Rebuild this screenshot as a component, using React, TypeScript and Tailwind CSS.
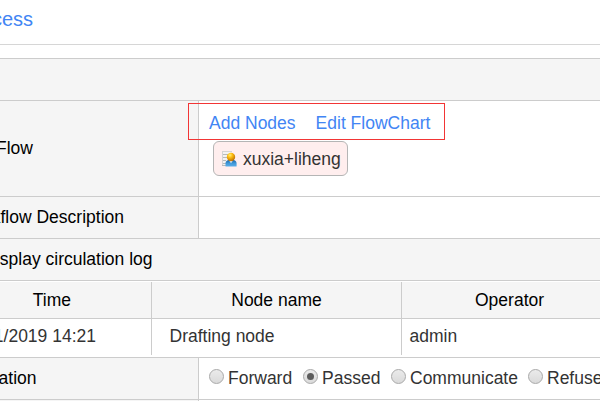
import type { ReactNode } from "react";

function UserIcon() {
  return (
    <svg width="16" height="16" viewBox="0 0 16 16" className="shrink-0">
      <defs>
        <radialGradient id="head" cx="0.38" cy="0.28" r="0.75">
          <stop offset="0" stopColor="#fff07a" />
          <stop offset="0.4" stopColor="#fdbb10" />
          <stop offset="1" stopColor="#b86a04" />
        </radialGradient>
        <linearGradient id="body" x1="0" y1="0" x2="0" y2="1">
          <stop offset="0" stopColor="#1b64a8" />
          <stop offset="0.5" stopColor="#3f97d8" />
          <stop offset="1" stopColor="#5aaeea" />
        </linearGradient>
      </defs>
      <rect x="1" y="0" width="10" height="15" fill="#f4f2f2" />
      <path d="M1 .5h10M1.500 0v15" stroke="#d4d4d4" />
      <path d="M2 3.500h6M2 6.500h4M2 9.500h3M2 12.500h3M1 14.500h5" stroke="#b9b9b9" />
      <path d="M4.500 15.500v-3C4.500 10.200 6 9 8 9h4c2.200 0 3.600 1.300 3.600 3.500v3z" fill="url(#body)" />
      <path d="M8 9.400h4l-2 2.800z" fill="#d7e9f7" />
      <circle cx="10" cy="6" r="4.200" fill="url(#head)" />
    </svg>
  );
}

function Radio({ checked = false }: { checked?: boolean }) {
  return (
    <span className="mr-1 flex size-[15px] shrink-0 -translate-y-px items-center justify-center rounded-full border border-[#a9a9a9] bg-linear-to-b from-[#ebebeb] to-[#dadada]">
      {checked && <span className="size-[7px] rounded-full bg-[#5c5c5c]" />}
    </span>
  );
}

function Label({ children, end }: { children: ReactNode; end: string }) {
  return (
    <div className="flex w-[199px] shrink-0 items-center border-r border-[#cccccc] bg-[#f5f5f5] pb-[2px] text-black">
      <div className={`flex justify-end ${end}`}>{children}</div>
    </div>
  );
}

export default function App() {
  return (
    <div className="h-[401px] w-[600px] overflow-hidden bg-white font-['Liberation_Sans',Arial,sans-serif] text-[17.5px] leading-[22px] whitespace-nowrap text-[#333333]">
      <header className="flex h-[45px] border-b border-[#d6d6d6] pt-2 text-[20px] text-[#4285f4]">
        <div className="flex w-[33px] justify-end">cess</div>
      </header>
      <main className="mt-[13px] border-t border-[#cccccc]">
        <div className="h-[42px] border-b border-[#cccccc] bg-[#f5f5f5]" />
        <div className="flex h-24 border-b border-[#cccccc]">
          <Label end="w-[33px]">Flow</Label>
          <div className="relative z-10 -ml-[11px] pt-[2px]">
            <div className="flex h-[37px] w-[257px] items-center gap-5 border border-[#f23535] pt-[2px] pl-5 text-[#4285f4]">
              <a>Add Nodes</a>
              <a>Edit FlowChart</a>
            </div>
            <div className="mt-px ml-[25px] flex h-[35px] w-[135px] items-center gap-[6px] rounded-[6px] border border-[#b5b5b5] bg-[#ffeeee] pl-[7px]">
              <UserIcon />
              <span>xuxia+liheng</span>
            </div>
          </div>
        </div>
        <div className="flex h-[42px] border-b border-[#cccccc]">
          <Label end="w-[124px]">kflow Description</Label>
        </div>
        <div className="flex h-[42px] items-center border-b border-[#cccccc] bg-[#f5f5f5] pb-[2px] text-black">
          <div className="flex w-[152.5px] justify-end">isplay circulation log</div>
        </div>
        <div className="flex h-[38px] border-b border-[#cccccc] pt-px text-black">
          <div className="flex w-[152px] items-center justify-end border-r border-[#cccccc] bg-[#f5f5f5] pr-20">Time</div>
          <div className="flex w-[250px] items-center justify-center border-r border-[#cccccc] bg-[#f5f5f5]">Node name</div>
          <div className="flex flex-1 items-center bg-[#f5f5f5] pl-[73px]">Operator</div>
        </div>
        <div className="flex h-[39px] border-b border-[#cccccc] pb-[2px]">
          <div className="flex w-[152px] items-center justify-end border-r border-[#cccccc] pr-[55px] pb-[2px]">11/2019 14:21</div>
          <div className="flex w-[250px] items-center border-r border-[#cccccc] pb-[2px] pl-[17.5px]">Drafting node</div>
          <div className="flex items-center pb-[2px] pl-[7.5px]">admin</div>
        </div>
        <div className="flex h-[42px] border-b border-[#cccccc]">
          <Label end="w-[36.5px]">ation</Label>
          <div className="flex items-center pb-[2px] pl-[10px]">
            <label className="flex w-[94px] items-center"><Radio />Forward</label>
            <label className="flex w-[88px] items-center"><Radio checked />Passed</label>
            <label className="flex w-[137px] items-center"><Radio />Communicate</label>
            <label className="flex items-center"><Radio />Refuse</label>
          </div>
        </div>
        <div className="flex h-px">
          <div className="w-[199px] border-r border-[#cccccc] bg-[#f5f5f5]" />
        </div>
      </main>
    </div>
  );
}
